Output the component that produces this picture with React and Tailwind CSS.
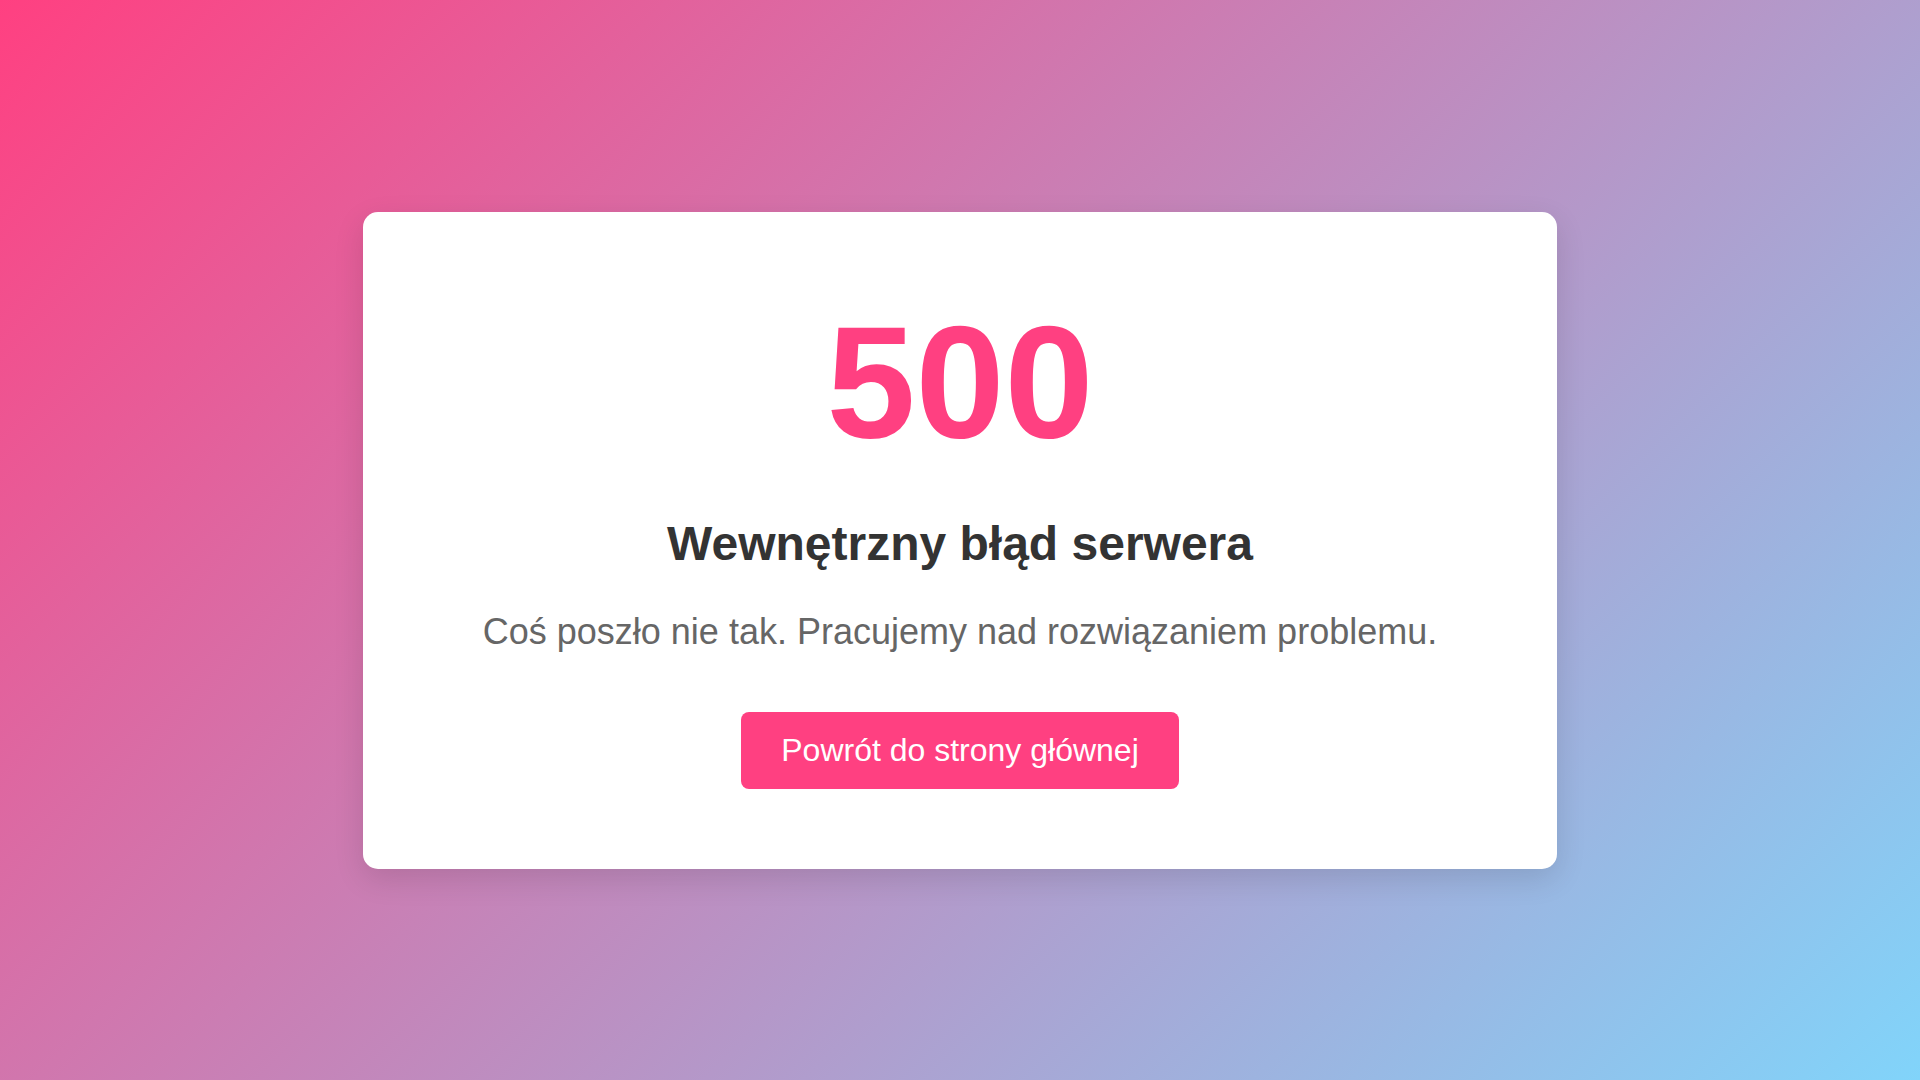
import React from 'react';

const App = () => {
  return (
    <div className="min-h-screen w-full flex items-center justify-center bg-[linear-gradient(135deg,#ff4081,#81d4fa)] font-['Liberation_Sans',Arial,sans-serif]">
      {/* Error card */}
      <div className="w-[1194px] bg-white rounded-[15px] shadow-[0_10px_30px_rgba(0,0,0,0.12)] px-[80px] py-[80px] flex flex-col items-center text-center">
        <h1 className="text-[160px] leading-[180px] font-bold text-[#ff4081]">500</h1>
        <h2 className="mt-[44px] text-[48px] leading-[55px] font-bold text-[#333333]">
          Wewnętrzny błąd serwera
        </h2>
        <p className="mt-[40px] text-[36px] leading-[41px] text-[#666666]">
          Coś poszło nie tak. Pracujemy nad rozwiązaniem problemu.
        </p>
        <a
          href="#"
          className="mt-[60px] inline-block bg-[#ff4081] text-white text-[32px] leading-[37px] px-[40px] py-[20px] rounded-[8px]"
        >
          Powrót do strony głównej
        </a>
      </div>
    </div>
  );
};

export default App;
